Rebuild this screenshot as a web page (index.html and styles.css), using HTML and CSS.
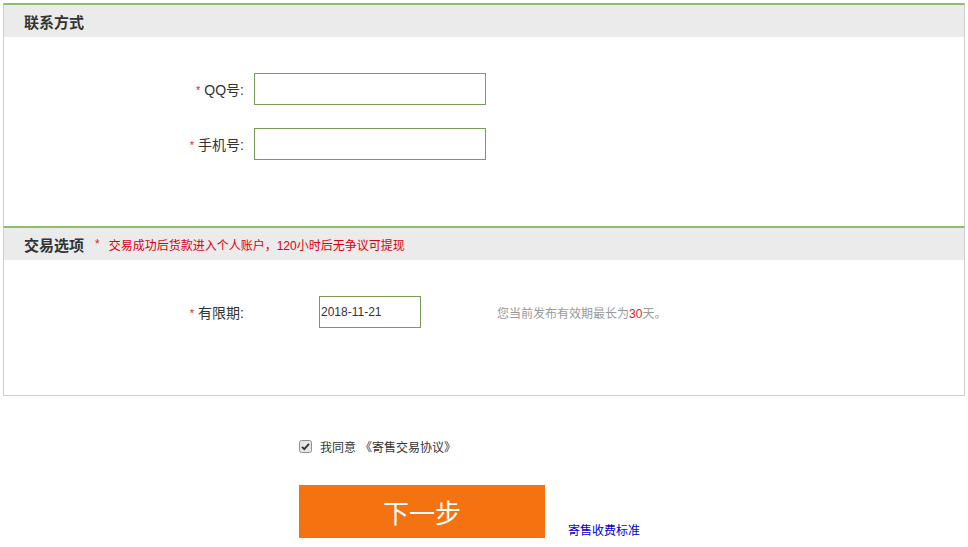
FILE: index.html
```html
<!DOCTYPE html>
<html lang="zh-CN">
<head>
<meta charset="utf-8">
<title>寄售</title>
<link rel="stylesheet" href="styles.css">
</head>
<body>
<div class="page">
  <div class="panel panel-first">
    <div class="panel-head"><span class="panel-title">联系方式</span></div>
    <div class="panel-body body-contact">
      <div class="row">
        <label class="label"><span class="req">*</span>QQ号:</label>
        <input class="field" type="text">
      </div>
      <div class="row">
        <label class="label"><span class="req">*</span>手机号:</label>
        <input class="field" type="text">
      </div>
    </div>
  </div>
  <div class="panel">
    <div class="panel-head">
      <span class="panel-title">交易选项</span>
      <span class="head-req">*</span>
      <span class="head-note">交易成功后货款进入个人账户，120小时后无争议可提现</span>
    </div>
    <div class="panel-body body-trade">
      <div class="row">
        <label class="label"><span class="req">*</span>有限期:</label>
        <input class="field date" type="text" value="2018-11-21">
        <span class="hint">您当前发布有效期最长为<em class="num">30</em>天。</span>
      </div>
    </div>
  </div>
  <div class="footer">
    <div class="agree">
      <span class="check"><svg width="13" height="13" viewBox="0 0 13 13"><rect x="0.5" y="0.5" width="12" height="12" rx="2" fill="#e6e6e6" stroke="#8f8f8f"/><path d="M3 6.8 L5.3 9.2 L10 3.8" fill="none" stroke="#333" stroke-width="1.8"/></svg></span>
      <span class="agree-text">我同意</span>
      <span class="agree-doc">《寄售交易协议》</span>
    </div>
    <div class="actions">
      <button class="next" type="button">下一步</button>
      <a class="fee" href="#">寄售收费标准</a>
    </div>
  </div>
</div>
</body>
</html>
```

FILE: styles.css
```css
html, body {
  margin: 0;
  padding: 0;
  background: #fff;
}
body {
  font-family: "Liberation Sans", "Noto Sans CJK SC", sans-serif;
  color: #333;
  font-size: 12px;
}
.page {
  padding: 3px;
}
.panel {
  border: 1px solid #cfcfcf;
  border-top: 2px solid #8bbd6b;
}
.panel-first {
  border-bottom: none;
}
.panel-head {
  background: #ebebeb;
  height: 32px;
  display: flex;
  align-items: center;
  padding-left: 20px;
}
.panel-title {
  font-size: 15px;
  font-weight: bold;
  color: #333;
}
.head-req {
  color: #e0212b;
  font-size: 12px;
  margin-left: 11px;
}
.head-note {
  color: #d9000f;
  font-size: 12px;
  margin-left: 9px;
}
.panel-body {
  display: flex;
  flex-direction: column;
  gap: 23px;
}
.body-contact {
  padding: 36px 0 66px;
}
.body-trade {
  padding: 36px 0 67px;
}
.row {
  display: flex;
  align-items: center;
  height: 32px;
}
.label {
  width: 240px;
  text-align: right;
  font-size: 14px;
  color: #333;
}
.req {
  color: #e0212b;
  font-size: 11px;
  margin-right: 4px;
  position: relative;
  top: -1px;
}
.field {
  box-sizing: border-box;
  width: 232px;
  height: 32px;
  margin: 0 0 0 10px;
  border: 1px solid #7a9a5c;
  padding: 0 2px;
  font-family: "Liberation Sans", "Noto Sans CJK SC", sans-serif;
  font-size: 12px;
  color: #333;
  outline: none;
}
.field.date {
  width: 102px;
  margin-left: 75px;
  padding-left: 1px;
}
.hint {
  margin-left: 76px;
  color: #999;
  font-size: 12px;
}
.num {
  font-style: normal;
  color: #e0212b;
}
.footer {
  padding-left: 296px;
}
.agree {
  display: flex;
  align-items: center;
  margin-top: 40px;
  height: 20px;
}
.check {
  display: inline-flex;
  width: 13px;
  height: 13px;
}
.agree-text {
  margin-left: 8px;
  font-size: 12px;
  color: #333;
}
.agree-doc {
  margin-left: 4px;
  font-size: 12px;
  color: #333;
}
.actions {
  display: flex;
  align-items: flex-end;
  margin-top: 29px;
}
.next {
  width: 246px;
  height: 53px;
  margin: 0;
  border: none;
  background: #f47310;
  color: #fff;
  font-family: "Noto Sans CJK SC", sans-serif;
  font-size: 26px;
  padding: 0;
  cursor: pointer;
}
.fee {
  margin-left: 23px;
  font-size: 12px;
  line-height: 14px;
  color: #0000cc;
  text-decoration: none;
}
```
